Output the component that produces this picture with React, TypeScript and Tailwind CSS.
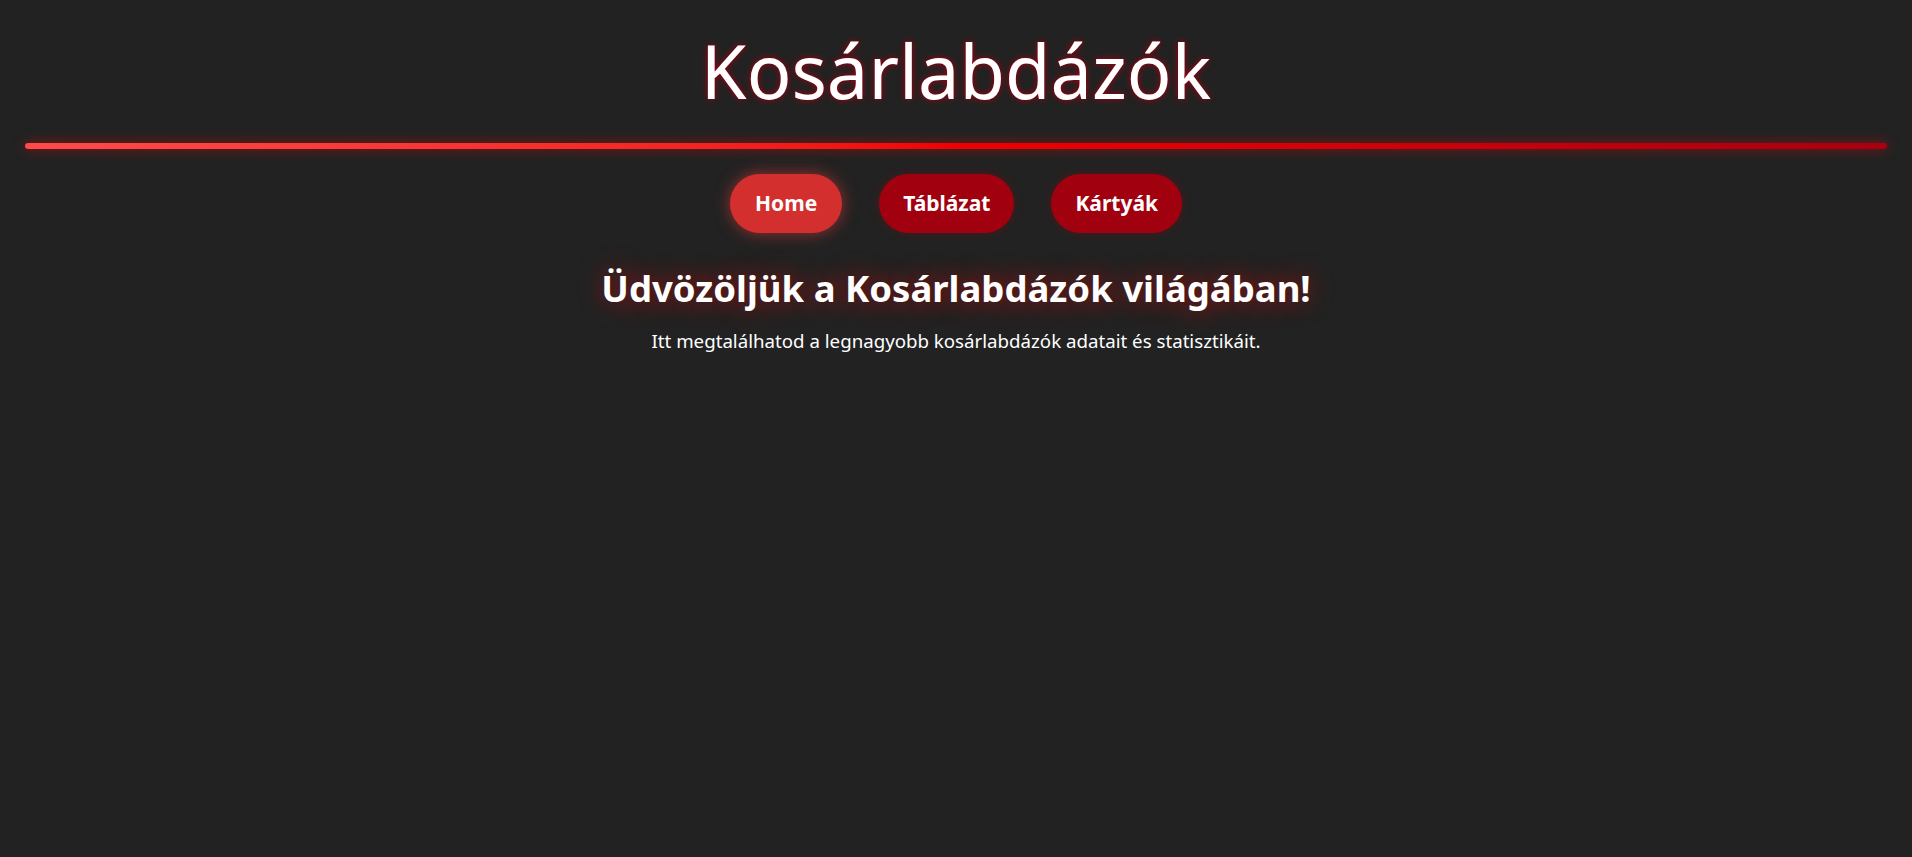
const links = [
  { name: "Home", active: true },
  { name: "Táblázat", active: false },
  { name: "Kártyák", active: false },
];

export default function App() {
  return (
    <div className="min-h-screen bg-[#222222] text-white font-['Noto_Sans',sans-serif]">
      <header className="pt-[34px]">
        <h1 className="text-center text-[74px] leading-none font-normal [text-shadow:0_0_6px_#a00012,0_0_2px_#7a000c]">
          Kosárlabdázók
        </h1>

        <div className="mx-[25px] mt-[35px] h-[6px] rounded-full bg-gradient-to-r from-[#ff4a4a] via-[#f00000] to-[#a8000f] shadow-[0_0_12px_rgba(255,0,0,0.55)]" />
      </header>

      <nav className="mt-[25px] flex justify-center gap-[37px]">
        {links.map((link) => (
          <a
            key={link.name}
            href="#"
            className={
              link.active
                ? "h-[59px] px-[25px] flex items-center rounded-full bg-[#d32f2f] text-[21px] font-bold shadow-[0_0_16px_rgba(255,60,60,0.55)]"
                : "h-[59px] px-[24px] flex items-center rounded-full bg-[#a1000f] text-[21px] font-bold shadow-[0_0_10px_rgba(160,0,15,0.35)]"
            }
          >
            {link.name}
          </a>
        ))}
      </nav>

      <main className="mt-[37px] text-center">
        <h2 className="text-[36.5px] leading-none font-bold [text-shadow:0_0_24px_rgba(255,0,0,0.6)]">
          Üdvözöljük a Kosárlabdázók világában!
        </h2>
        <p className="mt-[25px] text-[18.7px] leading-none">
          Itt megtalálhatod a legnagyobb kosárlabdázók adatait és statisztikáit.
        </p>
      </main>
    </div>
  );
}
